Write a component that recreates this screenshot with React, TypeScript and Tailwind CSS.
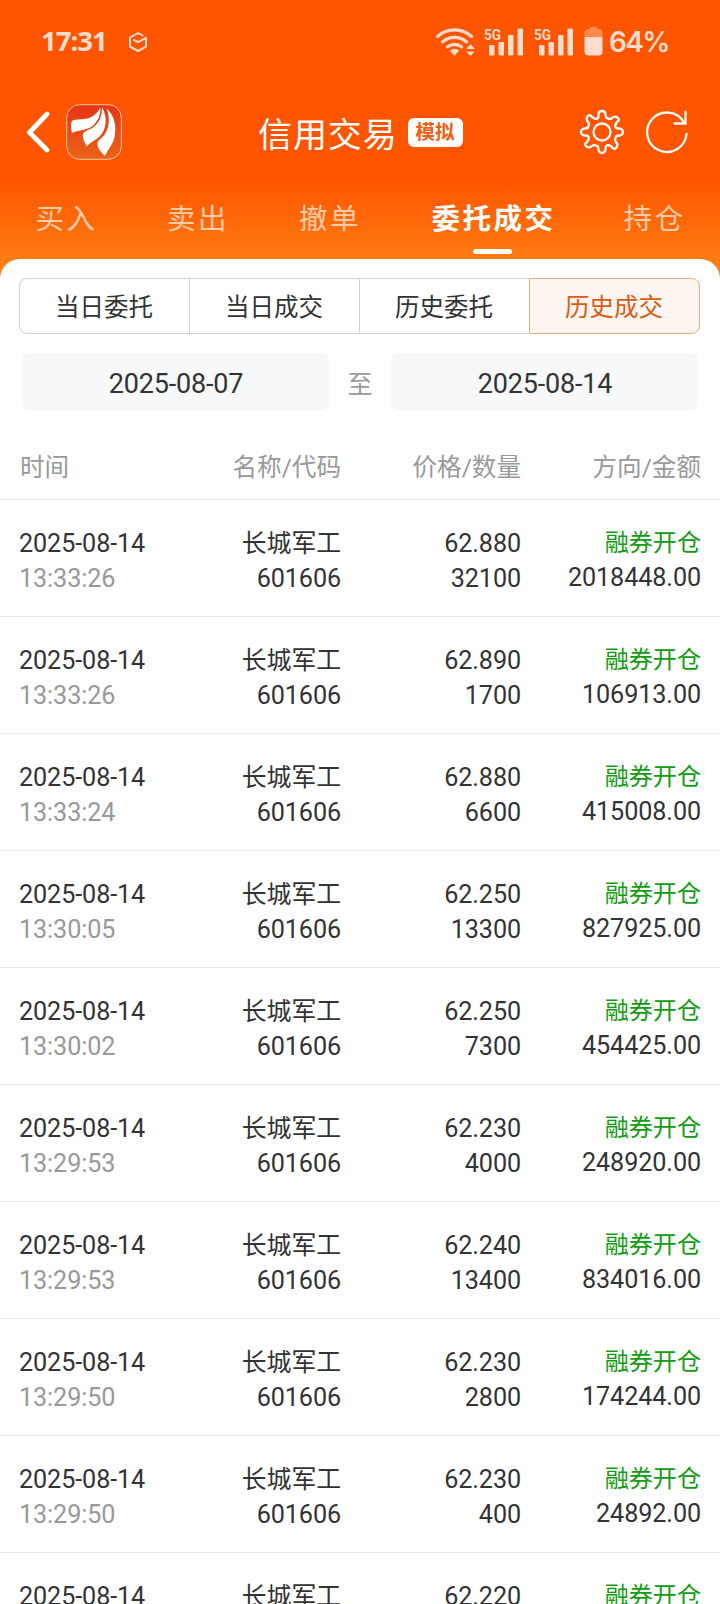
import React from 'react';

interface Trade {
  time?: string;
  price: string;
  amount?: string;
  total?: string;
}

const trades: Trade[] = [
  { time: '13:33:26', price: '62.880', amount: '32100', total: '2018448.00' },
  { time: '13:33:26', price: '62.890', amount: '1700', total: '106913.00' },
  { time: '13:33:24', price: '62.880', amount: '6600', total: '415008.00' },
  { time: '13:30:05', price: '62.250', amount: '13300', total: '827925.00' },
  { time: '13:30:02', price: '62.250', amount: '7300', total: '454425.00' },
  { time: '13:29:53', price: '62.230', amount: '4000', total: '248920.00' },
  { time: '13:29:53', price: '62.240', amount: '13400', total: '834016.00' },
  { time: '13:29:50', price: '62.230', amount: '2800', total: '174244.00' },
  { time: '13:29:50', price: '62.230', amount: '400', total: '24892.00' },
  { price: '62.220' },
];

const SignalIcon = () => (
  <svg className="h-[30px] w-[40px] overflow-visible" viewBox="0 0 40 30" fill="#ffdccb">
    <text x="0" y="12.5" fontSize="15.5" fontWeight="700" textLength="17" lengthAdjust="spacingAndGlyphs" fontFamily="Roboto, sans-serif">
      5G
    </text>
    <rect x="5" y="18" width="5.5" height="10.5" rx="1" />
    <rect x="14.5" y="15" width="5.5" height="13.5" rx="1" />
    <rect x="24" y="8" width="5.5" height="20.5" rx="1" />
    <rect x="33.5" y="1.5" width="5.5" height="27" rx="1" />
  </svg>
);

const StatusBar = () => (
  <div className="flex h-[83px] items-center pl-[41px] text-[#ffdccb]">
    <span className="mb-[2px] w-[87px] font-['Open_Sans',sans-serif] text-[27.5px] leading-none font-bold tracking-[-1px]">17:31</span>
    <svg className="mt-[1px] h-[20px] w-[19px]" viewBox="0 0 19 20" fill="none" stroke="#ffdccb" strokeWidth="2" strokeLinejoin="round" strokeLinecap="round">
      <path d="M14.5 3.5 10 1 2 5.5v9.2L10 19l8-4.3V5.8L10 10.2 6 8" />
    </svg>
    <svg className="ml-[288px] h-[30px] w-[40px]" viewBox="0 0 40 30" fill="none" stroke="#ffdccb" strokeWidth="3.2" strokeLinecap="round">
      <path d="M2.5 9.500c9.500-8.800 24.500-8.800 34 0" />
      <path d="M7.300 15c7-6.200 17.400-6.200 24.400 0" />
      <path d="M12.300 20c4.200-3.600 10.200-3.600 14.400 0" />
      <path d="M14.800 23.700q4.700-4 9.400 0l-4.700 5z" fill="#ffdccb" stroke="none" />
      <path d="m35.500 17 4.300 5h-8.600zM35.500 29l-4.300-4.500h8.600z" fill="#ffdccb" stroke="none" />
    </svg>
    <div className="ml-[9px] flex gap-[10px]">
      <SignalIcon />
      <SignalIcon />
    </div>
    <svg className="ml-[10px] h-[30px] w-[19px]" viewBox="0 0 19 30">
      <path d="M6 2V1q0-1 1-1h5q1 0 1 1v1h2q3.500 0 3.500 4v4H.5V6Q.5 2 4 2z" fill="#ff8a4d" />
      <path d="M.5 10h18v14.500q0 4-4 4h-10q-4 0-4-4z" fill="#ffdccb" />
    </svg>
    <span className="mt-[1px] ml-[6px] font-[Inter,sans-serif] text-[28px] leading-none font-semibold tracking-[-1.6px]">64%</span>
  </div>
);

const AppLogo = () => (
  <svg className="h-[56px] w-[56px]" viewBox="0 0 56 56">
    <defs>
      <linearGradient id="logo" x1="0" y1="0" x2="0" y2="1">
        <stop offset="0" stopColor="#e63416" />
        <stop offset="1" stopColor="#eb6418" />
      </linearGradient>
    </defs>
    <rect x=".7" y=".7" width="54.600" height="54.600" rx="13" fill="url(#logo)" stroke="#ffc7a0" strokeWidth="1" />
    <g fill="#fff">
      <path d="M34.500 3.500C30 11 25 14.500 17 15.300 11 15.700 7 15 5.500 18c-1 3-.5 7 .5 11C12 26 19 26.500 25 23 32 18.500 34.500 11 34.500 3.500z" />
      <path d="M36 3c0 9-2.500 15.500-8.500 20C23 26.500 18.500 26.500 17 30c-1 4 1.500 8.500 4 12.500C24 38 29 37 34 32 41 24.500 41.500 13 36 3z" />
      <path d="M40.500 4.500C44.500 14 43 25 38 31.500c-3.500 4-7 4.500-6.500 9.500.5 4 4 7.500 7.500 11 2.500-6.500 8-11 9.500-19C51 21 48 11 40.500 4.500z" />
    </g>
  </svg>
);

const GearIcon = () => (
  <svg className="h-[46px] w-[46px]" viewBox="0 0 46 46" fill="none" stroke="#fff" strokeWidth="2.300" strokeLinejoin="round">
    <circle cx="23" cy="23" r="8.500" />
    <path d="M19.5 5Q20 2 23 2T26.500 5L27 8.500Q30.500 11 33 9L34.500 8Q37 7 39 9T38.500 12.500L37 14.500Q35 17.500 37.500 19.300L41 19.500Q44 20.500 44 23T41 26.500L37.500 27Q35 30.500 37 33L38 34.500Q39 37 37 39T33.500 38.500L31.500 37Q28.500 35 26.700 37.500L26.500 41Q25.500 44 23 44T19.500 41L19 37.500Q15.500 35 13 37L11.500 38Q9 39 7 37T7.500 33.500L9 31.500Q11 28.500 8.500 26.700L5 26.500Q2 25.500 2 23T5 19.500L8.500 19Q11 15.500 9 13L8 11.500Q7 9 9 7T12.500 7.500L14.500 9Q17.500 11 19.300 8.500Z" />
  </svg>
);

const TitleBar = () => (
  <div className="flex h-[98px] items-center pl-[26px]">
    <svg className="h-[42px] w-[24px]" viewBox="0 0 24 42" fill="none" stroke="#fff" strokeWidth="4.800" strokeLinecap="round" strokeLinejoin="round">
      <path d="M21 3 3.500 21.500 21 39" />
    </svg>
    <div className="ml-[16px]">
      <AppLogo />
    </div>
    <h1 className="mt-[5px] ml-[136px] text-[34px] leading-none tracking-[0.900px] whitespace-nowrap text-white">信用交易</h1>
    <span className="ml-[10px] flex h-[29px] w-[55px] items-center justify-center rounded-[6px] bg-white pt-[2px] text-[19.500px] leading-none font-bold text-[#f06010]">
      模拟
    </span>
    <div className="ml-[116px] flex items-center gap-[20px]">
      <GearIcon />
      <svg className="h-[46px] w-[44px]" viewBox="0 0 44 46" fill="none" stroke="#fff" strokeWidth="2.300" strokeLinecap="round">
        <path d="M41.500 25A19.700 19.700 0 1 1 39 13.500" />
        <path d="M40.500 3v11.500H29.500" />
      </svg>
    </div>
  </div>
);

const tabs = [
  { label: '买入', width: 'w-[130px]' },
  { label: '卖出', width: 'w-[133px]' },
  { label: '撤单', width: 'w-[131px]' },
  { label: '委托成交', width: 'w-[196px]', active: true },
  { label: '持仓', width: 'w-[126px]' },
];

const Tabs = () => (
  <div className="flex h-[78px]">
    {tabs.map((tab) => (
      <div key={tab.label} className={`${tab.width} flex shrink-0 flex-col items-center pt-[23px]`}>
        <span className={`pl-[3px] text-[28.500px] leading-[32px] tracking-[2.500px] ${tab.active ? 'font-bold text-white' : 'text-[#ffcba8]'}`}>
          {tab.label}
        </span>
        {tab.active && <span className="mt-[13px] h-[5px] w-[39px] rounded-full bg-white" />}
      </div>
    ))}
  </div>
);

const segments = ['当日委托', '当日成交', '历史委托', '历史成交'];

const SegmentControl = () => (
  <div className="mr-[20px] ml-[19px] flex h-[56px]">
    {segments.map((label, i) => {
      const active = i === segments.length - 1;
      return (
        <div
          key={label}
          className={`flex flex-1 items-center justify-center border pt-[5px] pr-px text-[24.500px] ${
            active ? 'rounded-r-[8px] border-[#dfb183] bg-[#fff5f1] text-[#dd5a12]' : 'border-r-0 border-[#d2d3d5] text-[#333]'
          } ${i === 0 ? 'rounded-l-[8px]' : ''}`}
        >
          {label}
        </div>
      );
    })}
  </div>
);

const DateBox = ({ value }: { value: string }) => (
  <div className="flex h-[58px] w-[307px] items-center justify-center rounded-[7px] bg-[#f7f8fa] pt-[5px] pl-px text-[27px] tracking-[-0.200px] text-[#333]">
    {value}
  </div>
);

const TradeRow = ({ trade }: { trade: Trade }) => (
  <div className="grid h-[117px] shrink-0 grid-cols-[142px_180px_180px_180px] border-b border-[#ebebeb] pt-[26px] pl-[19px] text-right text-[25.200px] leading-[35px] tracking-[-0.100px] text-[#333]">
    <div className="text-left">
      <p>2025-08-14</p>
      {trade.time && <p className="text-[#999]">{trade.time}</p>}
    </div>
    <div>
      <p className="text-[24.900px]">长城军工</p>
      {trade.time && <p>601606</p>}
    </div>
    <div>
      <p>{trade.price}</p>
      {trade.amount && <p>{trade.amount}</p>}
    </div>
    <div>
      <p className="text-[24.200px] text-[#109d10]">融券开仓</p>
      {trade.total && <p className="-mt-px">{trade.total}</p>}
    </div>
  </div>
);

const App: React.FC = () => {
  return (
    <div className="flex h-[1604px] w-[720px] flex-col overflow-hidden bg-[linear-gradient(#ff5500_0px,#ff5500_180px,#ff7d14_262px,#ff8418_290px)] font-[Roboto,'Noto_Sans_CJK_SC',sans-serif]">
      <StatusBar />
      <TitleBar />
      <Tabs />
      <main className="min-h-0 flex-1 overflow-hidden rounded-t-[20px] bg-white pt-[19px]">
        <SegmentControl />
        <div className="mt-[19px] flex h-[58px] items-center justify-between px-[22px]">
          <DateBox value="2025-08-07" />
          <span className="pt-[5px] text-[25px] text-[#999]">至</span>
          <DateBox value="2025-08-14" />
        </div>
        <div className="grid h-[89px] grid-cols-[141px_180px_180px_180px] items-center border-b border-[#ebebeb] pt-[26px] pl-[20px] text-right text-[24.600px] text-[#999]">
          <span className="text-left">时间</span>
          <span>名称/代码</span>
          <span>价格/数量</span>
          <span>方向/金额</span>
        </div>
        {trades.map((trade, i) => (
          <TradeRow key={i} trade={trade} />
        ))}
      </main>
    </div>
  );
};

export default App;
